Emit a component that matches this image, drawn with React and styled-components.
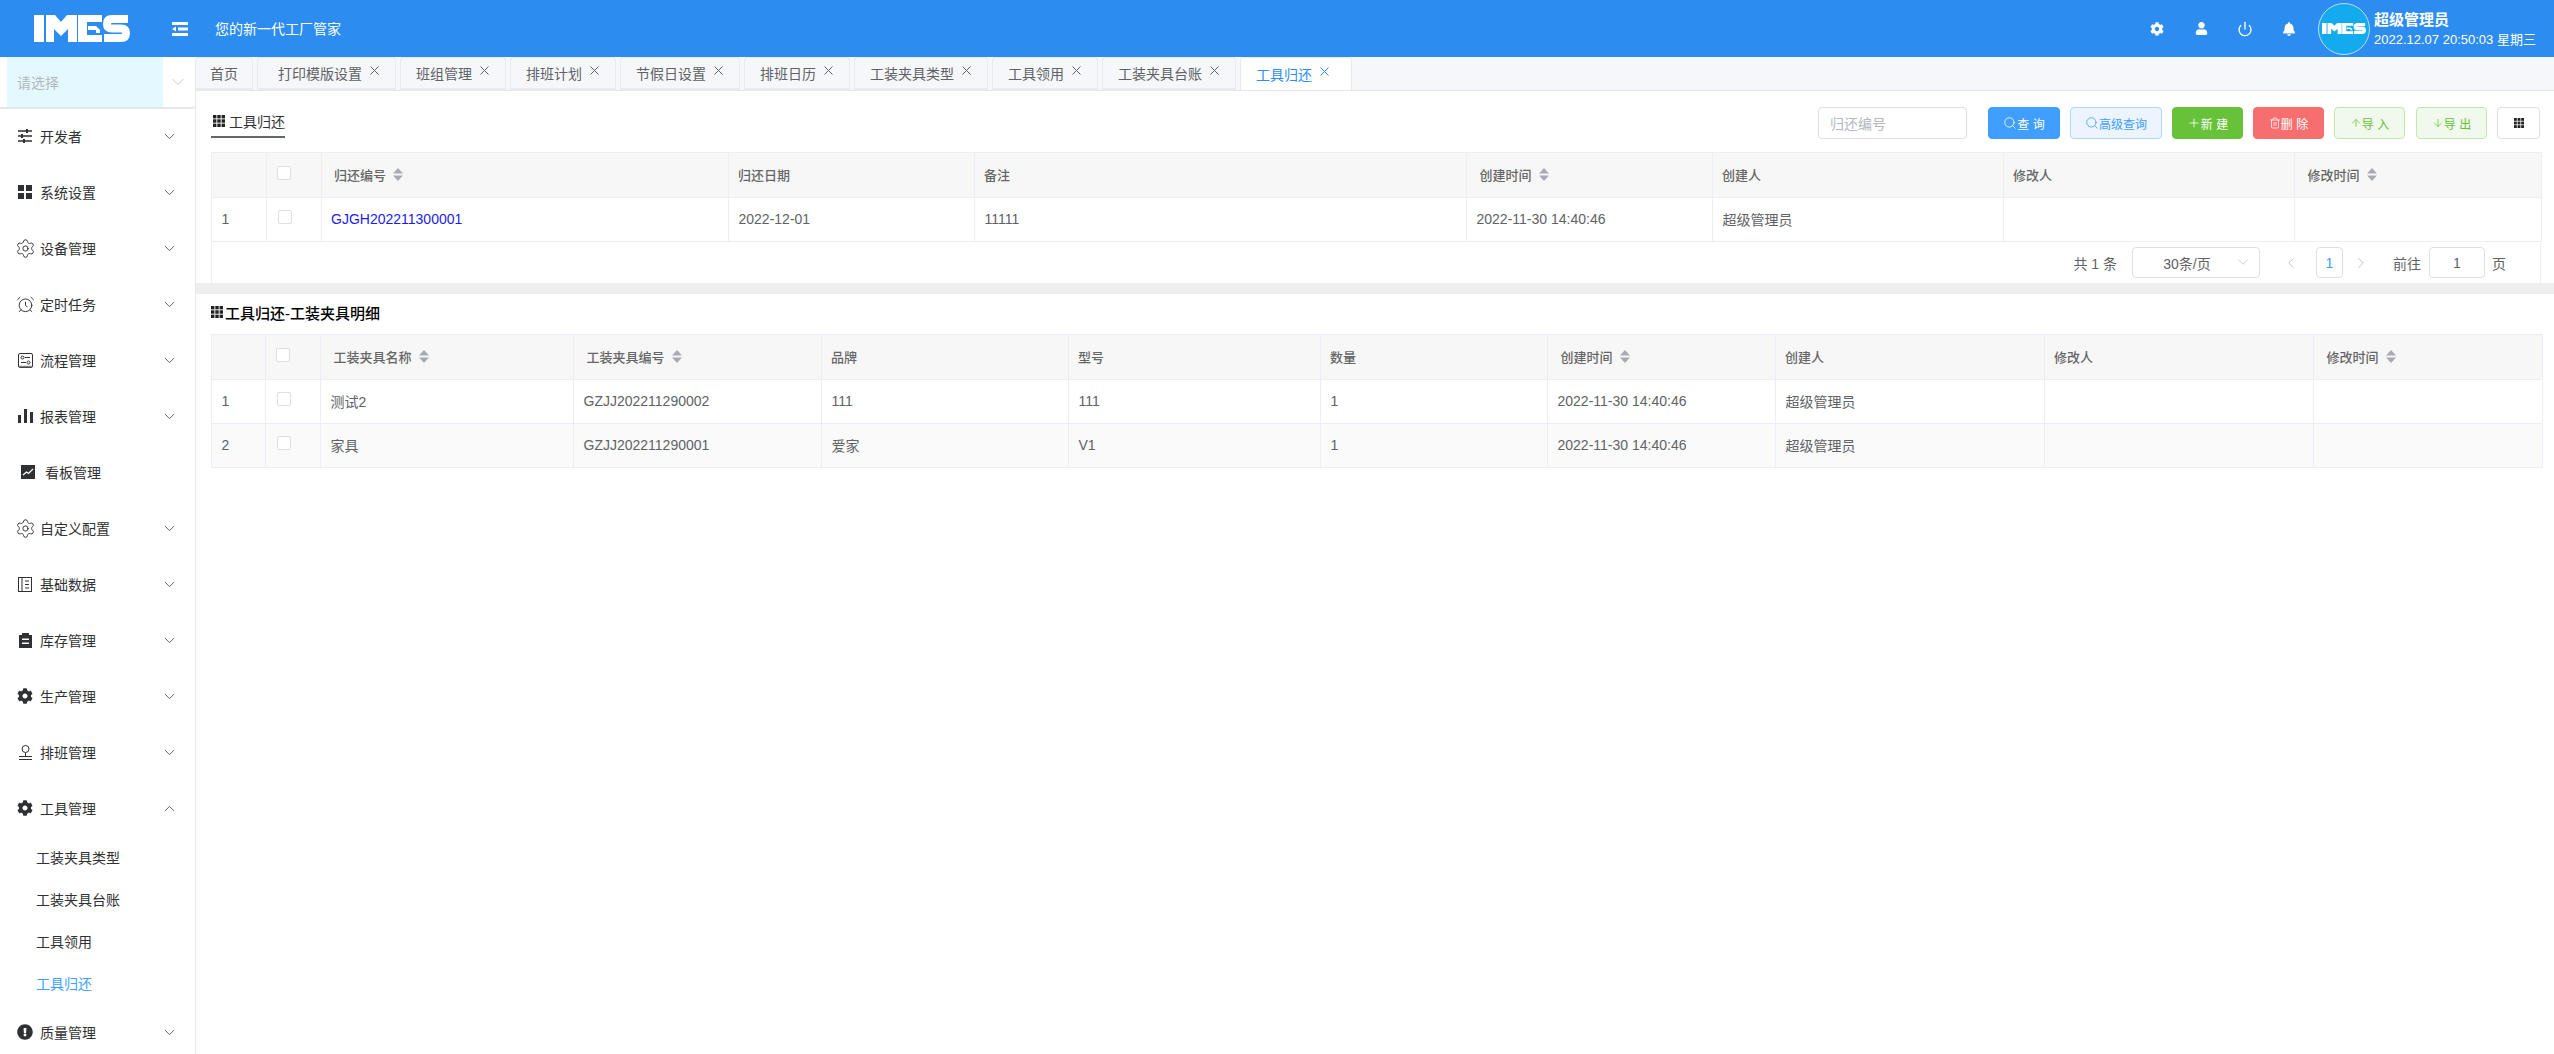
import React from "react";
import styled, { createGlobalStyle } from "styled-components";
import { ChevronDown, ChevronUp, ChevronLeft, ChevronRight, Settings, AlarmClock, Power, Search, Plus, Trash2, ArrowUp, ArrowDown } from "lucide-react";
import { FaCog, FaBell, FaExclamationCircle, FaUser } from "react-icons/fa";

const Global = createGlobalStyle`
  html, body { margin: 0; padding: 0; background: #fff; }
  body { font-family: "Liberation Sans", "Noto Sans CJK SC", sans-serif; font-size: 14px; color: #606266; }
  * { box-sizing: border-box; }
`;

const Page = styled.div`
  width: 2554px; height: 1054px; overflow: hidden;
  display: flex; flex-direction: column;
`;
const Header = styled.header`
  height: 57px; flex: none; background: #2d8cf0; color: #fff;
  display: flex; align-items: center; padding-left: 34px;
`;
const LogoSvg = styled.svg`
  display: block; flex: none;
  width: ${p => p.$w}px; height: ${p => p.$h}px;
`;
const MenuToggle = styled.svg`
  width: 16px; height: 14px; margin-left: 42px; flex: none;
`;
const Slogan = styled.div`
  margin-left: 27px; font-size: 14px; color: #fff; padding-bottom: 2px;
`;
const HeaderRight = styled.div`
  margin-left: auto; display: flex; align-items: center; padding-right: 30px;
`;
const HeadIcons = styled.div`
  display: flex; align-items: center; gap: 30px; margin-right: 22px;
`;
const HeadIcon = styled.span`
  width: 14px; height: 16px; display: flex; align-items: center; justify-content: center; color: #fff;
  svg { flex: none; }
`;
const Avatar = styled.div`
  width: 52px; height: 52px; border-radius: 50%; background: #13aaee;
  border: 1px solid #bcdcf5; display: flex; align-items: center; justify-content: center;
  flex: none;
`;
const UserBox = styled.div`
  margin-left: 4px; width: 150px; white-space: nowrap;
`;
const UserName = styled.div`
  font-size: 15px; font-weight: 700; line-height: 18px; color: #fff; margin-top: 1px;
`;
const UserDate = styled.div`
  font-size: 13px; line-height: 16px; margin-top: 3px; color: #fff;
`;

const Body = styled.div`
  flex: 1; display: flex; min-height: 0;
`;
const Sidebar = styled.aside`
  width: 196px; flex: none; border-right: 1px solid #e8e8e8; overflow: hidden;
`;
const SideSelect = styled.div`
  height: 52px; padding-left: 7px; display: flex; align-items: stretch;
  border-bottom: 2px solid #e4e7ed; border-radius: 0 0 4px 0;
`;
const SideSelectField = styled.div`
  width: 156px; background: #e4f9ff; color: #b4b7bd; font-size: 14px;
  padding-left: 10px; display: flex; align-items: center;
`;
const SideSelectArrow = styled.span`
  margin-left: 5px; width: 20px; display: flex; align-items: center; justify-content: center;
  color: #c0c4cc;
`;
const NavRow = styled.div`
  height: 56px; display: flex; align-items: center; padding-left: ${p => p.$pad || 17}px;
  padding-bottom: 2px; color: #303133; font-size: 14px;
`;
const NavIcon = styled.span`
  width: 16px; height: 16px; flex: none; display: flex; align-items: center; justify-content: center;
  color: #303133;
  svg { flex: none; }
`;
const NavText = styled.span`
  margin-left: ${p => p.$gap || 7}px;
`;
const NavChevron = styled.span`
  margin-left: auto; margin-right: 17px; display: flex; color: #606266;
`;
const SubRow = styled.div`
  height: 42px; display: flex; align-items: center; padding-left: 36px; padding-bottom: 2px; font-size: 14px;
  color: ${p => (p.$active ? "#409eff" : "#303133")};
`;

const Main = styled.main`
  flex: 1; min-width: 0; display: flex; flex-direction: column;
`;
const TabBar = styled.div`
  height: 34px; flex: none; background: #f5f7fa; border-bottom: 1px solid #e4e7ed;
  display: flex; gap: 4px; margin-left: -1px;
`;
const Tab = styled.div`
  height: 33px; flex: none; display: flex; align-items: center;
  padding: 0 ${p => p.$pr}px 0 ${p => p.$pl}px;
  background: ${p => (p.$active ? "#fff" : "#f5f7fa")};
  color: ${p => (p.$active ? "#2d8cf0" : "#606266")};
  border: 1px solid #e8eaef; border-bottom-width: ${p => (p.$active ? 0 : 2)}px;
  border-radius: 4px 4px 0 0; font-size: 14px; white-space: nowrap;
`;
const TabClose = styled.svg`
  display: block; flex: none; width: 9px; height: 9px; margin-left: 8px; margin-top: -5px;
`;
const SectionTop = styled.section`
  padding: 16px 13px 0 15px;
`;
const Toolbar = styled.div`
  display: flex; align-items: flex-start; height: 32px; padding-right: 1px;
`;
const TitleTab = styled.div`
  display: flex; align-items: center; gap: 4px; height: 31px; padding: 0 0 2px 2px; width: 74px;
  border-bottom: 2px solid #666; color: #303133; font-size: 14px; white-space: nowrap;
`;
const GridGlyph = styled.svg`
  width: ${p => p.$size}px; height: ${p => p.$size}px; flex: none; display: block;
`;
const SearchInput = styled.div`
  margin-left: auto; width: 149px; height: 32px; border: 1px solid #dcdfe6; border-radius: 4px;
  color: #b4b7bd; font-size: 14px; padding-left: 11px; display: flex; align-items: center;
`;
const ActionBtn = styled.div`
  width: ${p => p.$w}px; height: 32px; margin-left: ${p => p.$ml}px; border-radius: 4px;
  display: flex; align-items: center; justify-content: center; font-size: 12px; white-space: pre;
  background: ${p => p.$bg}; color: ${p => p.$fg}; border: 1px solid ${p => p.$line};
`;
const Tbl = styled.table`
  width: ${p => p.$w}px; table-layout: fixed; border-collapse: collapse; margin-top: ${p => p.$mt}px;
  border: 1px solid #ebeef5;
`;
const Col = styled.col`
  width: ${p => p.$w}px;
`;
const Th = styled.th`
  height: 45px; background: #f7f7f8; border: 1px solid #ebeef5; font-size: 13px; font-weight: 500;
  color: #666; text-align: left; padding: 0 0 2px ${p => (p.$sort ? 12.5 : 9)}px; white-space: nowrap;
`;
const Td = styled.td`
  height: 44px; border: 1px solid #ebeef5; font-size: 14px;
  color: ${p => p.$color || "#606266"}; padding: 0 0 2px 9.5px; white-space: nowrap;
  background: ${p => (p.$stripe ? "#fafafa" : "#fff")};
`;
const ThInner = styled.span`
  display: inline-flex; align-items: center;
`;
const Caret = styled.svg`
  width: 10px; height: 13px; margin-left: 7px; flex: none;
`;
const Check = styled.span`
  display: block; width: 14px; height: 14px; margin: -3px 0 0 1px;
  border: 1px solid #dcdfe6; border-radius: 2px; background: #fff;
`;
const Pager = styled.div`
  width: 2330px; height: 41px; border: 1px solid #ebeef5; border-top: 0; border-bottom: 0;
  display: flex; align-items: center; justify-content: flex-end; padding-right: 34px;
  font-size: 14px; color: #606266;
`;
const PagerBox = styled.div`
  height: 31px; width: ${p => p.$w}px; margin-left: ${p => p.$ml}px;
  border: 1px solid #dcdfe6; border-radius: 4px; display: flex; align-items: center;
  justify-content: center; color: ${p => p.$fg || "#606266"}; font-size: 14px; position: relative;
  flex: none; padding-right: ${p => p.$pr || 0}px;
`;
const PagerArrow = styled.span`
  display: flex; position: absolute; right: 7px; top: 5px; color: #c0c4cc;
`;
const PagerNav = styled.span`
  display: flex; width: 14px; margin-left: ${p => p.$ml}px; color: #b4b7bd; justify-content: center;
  svg { flex: none; }
`;
const PagerText = styled.span`
  margin-left: ${p => p.$ml}px; white-space: pre;
`;
const Band = styled.div`
  height: 11px; flex: none; background: #eee;
`;
const SectionBottom = styled.section`
  padding: 8px 0 0 15px;
`;
const DetailTitle = styled.div`
  display: flex; align-items: center; gap: 2px; height: 20px; font-size: 15px; font-weight: 500;
  color: #000; white-space: nowrap;
`;

const Logo = ({ w, h }) => (
  <LogoSvg $w={w} $h={h} viewBox="0 0 96 27" preserveAspectRatio="none">
    <rect x="0" y="0" width="10" height="27" fill="#fff" />
    <path d="M12 0H21L27 7L33 0H43V27H34V14L27 21L20 14V27H12Z" fill="#fff" />
    <path fillRule="evenodd" d="M44 0H68V7H53V20H68V27H44ZM54 11H62L66 15V18H62V15H54Z" fill="#fff" />
    <path d="M94 4H78Q73 4 73 9Q73 13.5 78 13.5H87Q92 13.5 92 18Q92 23 87 23H70" fill="none" stroke="#fff" strokeWidth="8" />
  </LogoSvg>
);

const Grid3 = ({ size = 12 }) => (
  <GridGlyph $size={size} viewBox="0 0 12 12">
    {[0, 4.3, 8.6].flatMap(y => [0, 4.3, 8.6].map(x => <rect key={x + "-" + y} x={x} y={y} width="3.4" height="3.4" fill="#222" />))}
  </GridGlyph>
);

const SortCaret = () => (
  <Caret viewBox="0 0 10 13">
    <path d="M5 0L10 5.5H0Z M5 13L0 7.5H10Z" fill="#a8abb2" />
  </Caret>
);

const CloseX = () => (
  <TabClose viewBox="0 0 9 9">
    <path d="M.5 .5L8.5 8.5M8.5 .5L.5 8.5" stroke="currentColor" strokeWidth="1" fill="none" />
  </TabClose>
);

const SlidersIcon = () => (
  <svg width="16" height="14" viewBox="0 0 16 14">
    <g stroke="#303133" strokeWidth="1.3">
      <path d="M1 2H15M1 7H15M1 12H15" />
      <path d="M10 0V4M5 5V9M7 10V14" strokeWidth="2" />
    </g>
  </svg>
);
const SquaresIcon = () => (
  <svg width="14" height="14" viewBox="0 0 14 14">
    <path d="M0 0H6V6H0ZM8 0H14V6H8ZM0 8H6V14H0ZM8 8H14V14H8Z" fill="#303133" />
  </svg>
);
const FlowIcon = () => (
  <svg width="15" height="15" viewBox="0 0 15 15" fill="none" stroke="#303133">
    <rect x=".5" y=".5" width="14" height="14" rx="1.5" />
    <circle cx="4.5" cy="4.5" r="1.5" />
    <circle cx="10.5" cy="9.5" r="1.5" />
    <path d="M7 4.5H12M3 9.5H8" />
    <path d="M1 13.5H14" strokeWidth="1.5" stroke="#888" />
  </svg>
);
const BarsIcon = () => (
  <svg width="15" height="14" viewBox="0 0 15 14">
    <path d="M0 6H3V14H0ZM6 0H9V14H6ZM12 3H15V14H12Z" fill="#303133" />
  </svg>
);
const TrendIcon = () => (
  <svg width="14" height="14" viewBox="0 0 14 14">
    <rect width="14" height="14" fill="#303133" />
    <path d="M2 10L5.5 7L7.5 8.5L12 4" fill="none" stroke="#fff" strokeWidth="1.3" />
  </svg>
);
const BookIcon = () => (
  <svg width="14" height="15" viewBox="0 0 14 15" fill="none" stroke="#303133">
    <rect x=".5" y=".5" width="13" height="14" />
    <path d="M4 1V14M7 4H11M7 7.5H11M7 11H11" />
  </svg>
);
const ClipIcon = () => (
  <svg width="13" height="15" viewBox="0 0 13 15">
    <path fillRule="evenodd" d="M0 2H3V0H10V2H13V15H0ZM3 5.5H10V7H3ZM3 9.5H10V11H3Z" fill="#303133" />
  </svg>
);
const StampIcon = () => (
  <svg width="15" height="15" viewBox="0 0 15 15" fill="none" stroke="#303133">
    <circle cx="7.5" cy="4" r="3.5" />
    <path d="M7.5 8V11M1 11.5H14M1 14.5H14" />
  </svg>
);

const gear = <Settings size={21} strokeWidth={1.1} />;
const nav = [
  ["开发者", <SlidersIcon />], ["系统设置", <SquaresIcon />], ["设备管理", gear],
  ["定时任务", <AlarmClock size={19} strokeWidth={1.2} />], ["流程管理", <FlowIcon />], ["报表管理", <BarsIcon />],
  ["看板管理", <TrendIcon />, true], ["自定义配置", gear], ["基础数据", <BookIcon />],
  ["库存管理", <ClipIcon />], ["生产管理", <FaCog size={16} />], ["排班管理", <StampIcon />],
];
const subs = ["工装夹具类型", "工装夹具台账", "工具领用", "工具归还"];
const tabs = [
  ["首页", 14, 14], ["打印模版设置", 20, 16], ["班组管理"], ["排班计划"], ["节假日设置"], ["排班日历"],
  ["工装夹具类型"], ["工具领用"], ["工装夹具台账"], ["工具归还", 15, 22, true],
];

const topCols = [55, 54.5, 407.5, 246, 492, 246, 291, 291, 247];
const bottomCols = [54, 55, 253, 248, 247, 252, 227, 228, 269, 269, 229];

const buttons = [
  { w: 72, ml: 21, bg: "#409eff", fg: "#fff", line: "#409eff", icon: <Search size={14} strokeWidth={1.4} />, text: "查 询" },
  { w: 92, ml: 10, bg: "#ecf5ff", fg: "#409eff", line: "#b3d8ff", icon: <Search size={14} strokeWidth={1.4} />, text: "高级查询" },
  { w: 71, ml: 10, bg: "#67c23a", fg: "#fff", line: "#67c23a", icon: <Plus size={14} strokeWidth={1.4} />, text: "新 建" },
  { w: 71, ml: 10, bg: "#f76e6e", fg: "#fff", line: "#f76e6e", icon: <Trash2 size={12} strokeWidth={1.5} />, text: "删 除" },
  { w: 71, ml: 10, bg: "#f0f9eb", fg: "#67c23a", line: "#c2e7b0", icon: <ArrowUp size={12} strokeWidth={1.5} />, text: "导 入" },
  { w: 71, ml: 11, bg: "#f0f9eb", fg: "#67c23a", line: "#c2e7b0", icon: <ArrowDown size={12} strokeWidth={1.5} />, text: "导 出" },
];

export default function App() {
  return (
    <Page>
      <Global />
      <Header>
        <Logo w={96} h={27} />
        <MenuToggle viewBox="0 0 16 14">
          <path d="M0 0H16V3H0ZM6 5.5H16V8.5H6ZM0 11H16V14H0ZM4 4.5V9.5L0 7Z" fill="#fff" />
        </MenuToggle>
        <Slogan>您的新一代工厂管家</Slogan>
        <HeaderRight>
          <HeadIcons>
            <HeadIcon><FaCog size={14} /></HeadIcon>
            <HeadIcon><FaUser size={13} /></HeadIcon>
            <HeadIcon><Power size={16} strokeWidth={2} /></HeadIcon>
            <HeadIcon><FaBell size={14} /></HeadIcon>
          </HeadIcons>
          <Avatar><Logo w={44} h={11} /></Avatar>
          <UserBox>
            <UserName>超级管理员</UserName>
            <UserDate>2022.12.07 20:50:03 星期三</UserDate>
          </UserBox>
        </HeaderRight>
      </Header>
      <Body>
        <Sidebar>
          <SideSelect>
            <SideSelectField>请选择</SideSelectField>
            <SideSelectArrow><ChevronDown size={20} strokeWidth={1.1} /></SideSelectArrow>
          </SideSelect>
          {nav.map(([label, icon, odd]) => (
            <NavRow key={label} $pad={odd ? 20 : 17}>
              <NavIcon>{icon}</NavIcon>
              <NavText $gap={odd ? 9 : 7}>{label}</NavText>
              {!odd && <NavChevron><ChevronDown size={17} strokeWidth={1.4} /></NavChevron>}
            </NavRow>
          ))}
          <NavRow>
            <NavIcon><FaCog size={16} /></NavIcon>
            <NavText>工具管理</NavText>
            <NavChevron><ChevronUp size={17} strokeWidth={1.4} /></NavChevron>
          </NavRow>
          {subs.map((s, i) => <SubRow key={s} $active={i === 3}>{s}</SubRow>)}
          <NavRow>
            <NavIcon><FaExclamationCircle size={16} /></NavIcon>
            <NavText>质量管理</NavText>
            <NavChevron><ChevronDown size={17} strokeWidth={1.4} /></NavChevron>
          </NavRow>
        </Sidebar>
        <Main>
          <TabBar>
            {tabs.map(([t, pl = 15, pr = 16, active], i) => (
              <Tab key={t} $pl={pl} $pr={pr} $active={active}>
                {t}
                {i > 0 && <CloseX />}
              </Tab>
            ))}
          </TabBar>
          <SectionTop>
            <Toolbar>
              <TitleTab><Grid3 />工具归还</TitleTab>
              <SearchInput>归还编号</SearchInput>
              {buttons.map(b => (
                <ActionBtn key={b.text} $w={b.w} $ml={b.ml} $bg={b.bg} $fg={b.fg} $line={b.line}>
                  {b.icon}{b.text}
                </ActionBtn>
              ))}
              <ActionBtn $w={43} $ml={10} $bg="#fff" $fg="#303133" $line="#dcdfe6"><Grid3 size={10} /></ActionBtn>
            </Toolbar>
            <Tbl $w={2330} $mt={13}>
              <colgroup>{topCols.map((w, i) => <Col key={i} $w={w} />)}</colgroup>
              <thead>
                <tr>
                  <Th />
                  <Th><Check /></Th>
                  <Th $sort><ThInner>归还编号<SortCaret /></ThInner></Th>
                  <Th>归还日期</Th>
                  <Th>备注</Th>
                  <Th $sort><ThInner>创建时间<SortCaret /></ThInner></Th>
                  <Th>创建人</Th>
                  <Th>修改人</Th>
                  <Th $sort><ThInner>修改时间<SortCaret /></ThInner></Th>
                </tr>
              </thead>
              <tbody>
                <tr>
                  <Td>1</Td>
                  <Td><Check /></Td>
                  <Td $color="#1c1cf0">GJGH202211300001</Td>
                  <Td>2022-12-01</Td>
                  <Td>11111</Td>
                  <Td>2022-11-30 14:40:46</Td>
                  <Td>超级管理员</Td>
                  <Td />
                  <Td />
                </tr>
              </tbody>
            </Tbl>
            <Pager>
              <PagerText>共 1 条</PagerText>
              <PagerBox $w={128} $ml={15} $pr={18}>
                30条/页
                <PagerArrow><ChevronDown size={18} strokeWidth={1.1} /></PagerArrow>
              </PagerBox>
              <PagerNav $ml={24}><ChevronLeft size={18} strokeWidth={1.1} /></PagerNav>
              <PagerBox $w={27} $ml={18} $fg="#409eff">1</PagerBox>
              <PagerNav $ml={11}><ChevronRight size={18} strokeWidth={1.1} /></PagerNav>
              <PagerText $ml={25}>前往</PagerText>
              <PagerBox $w={56} $ml={8}>1</PagerBox>
              <PagerText $ml={7}>页</PagerText>
            </Pager>
          </SectionTop>
          <Band />
          <SectionBottom>
            <DetailTitle><Grid3 />工具归还-工装夹具明细</DetailTitle>
            <Tbl $w={2331} $mt={12}>
              <colgroup>{bottomCols.map((w, i) => <Col key={i} $w={w} />)}</colgroup>
              <thead>
                <tr>
                  <Th />
                  <Th><Check /></Th>
                  <Th $sort><ThInner>工装夹具名称<SortCaret /></ThInner></Th>
                  <Th $sort><ThInner>工装夹具编号<SortCaret /></ThInner></Th>
                  <Th>品牌</Th>
                  <Th>型号</Th>
                  <Th>数量</Th>
                  <Th $sort><ThInner>创建时间<SortCaret /></ThInner></Th>
                  <Th>创建人</Th>
                  <Th>修改人</Th>
                  <Th $sort><ThInner>修改时间<SortCaret /></ThInner></Th>
                </tr>
              </thead>
              <tbody>
                {[
                  ["1", "测试2", "GZJJ202211290002", "111", "111", "1", false],
                  ["2", "家具", "GZJJ202211290001", "爱家", "V1", "1", true],
                ].map(([n, name, code, brand, model, qty, st]) => (
                  <tr key={n}>
                    <Td $stripe={st}>{n}</Td>
                    <Td $stripe={st}><Check /></Td>
                    <Td $stripe={st}>{name}</Td>
                    <Td $stripe={st}>{code}</Td>
                    <Td $stripe={st}>{brand}</Td>
                    <Td $stripe={st}>{model}</Td>
                    <Td $stripe={st}>{qty}</Td>
                    <Td $stripe={st}>2022-11-30 14:40:46</Td>
                    <Td $stripe={st}>超级管理员</Td>
                    <Td $stripe={st} />
                    <Td $stripe={st} />
                  </tr>
                ))}
              </tbody>
            </Tbl>
          </SectionBottom>
        </Main>
      </Body>
    </Page>
  );
}
